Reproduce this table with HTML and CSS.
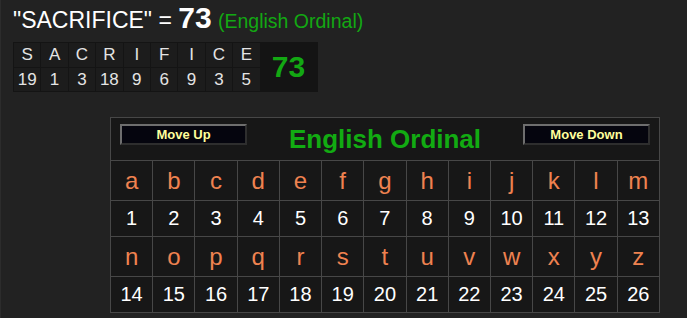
FILE: index.html
```html
<!DOCTYPE html>
<html lang="en">
<head>
<meta charset="utf-8">
<title>Gematria – SACRIFICE</title>
<link rel="stylesheet" href="styles.css">
</head>
<body>
<div class="page">
  <h1 class="phrase">
    <span class="word">"SACRIFICE" = </span><span class="total">73</span>
    <span class="cipher-name">(English Ordinal)</span>
  </h1>

  <div class="breakdown">
    <div class="bd-letter">S</div><div class="bd-letter">A</div><div class="bd-letter">C</div>
    <div class="bd-letter">R</div><div class="bd-letter">I</div><div class="bd-letter">F</div>
    <div class="bd-letter">I</div><div class="bd-letter">C</div><div class="bd-letter">E</div>
    <div class="bd-sum">73</div>
    <div class="bd-value">19</div><div class="bd-value">1</div><div class="bd-value">3</div>
    <div class="bd-value">18</div><div class="bd-value">9</div><div class="bd-value">6</div>
    <div class="bd-value">9</div><div class="bd-value">3</div><div class="bd-value">5</div>
  </div>

  <table class="chart">
    <thead>
      <tr>
        <th colspan="13">
          <div class="chart-head">
            <button class="move-btn" type="button">Move Up</button>
            <span class="chart-title">English Ordinal</span>
            <button class="move-btn" type="button">Move Down</button>
          </div>
        </th>
      </tr>
    </thead>
    <tbody>
      <tr class="letters">
        <td>a</td><td>b</td><td>c</td><td>d</td><td>e</td><td>f</td><td>g</td>
        <td>h</td><td>i</td><td>j</td><td>k</td><td>l</td><td>m</td>
      </tr>
      <tr class="values">
        <td>1</td><td>2</td><td>3</td><td>4</td><td>5</td><td>6</td><td>7</td>
        <td>8</td><td>9</td><td>10</td><td>11</td><td>12</td><td>13</td>
      </tr>
      <tr class="letters">
        <td>n</td><td>o</td><td>p</td><td>q</td><td>r</td><td>s</td><td>t</td>
        <td>u</td><td>v</td><td>w</td><td>x</td><td>y</td><td>z</td>
      </tr>
      <tr class="values">
        <td>14</td><td>15</td><td>16</td><td>17</td><td>18</td><td>19</td><td>20</td>
        <td>21</td><td>22</td><td>23</td><td>24</td><td>25</td><td>26</td>
      </tr>
    </tbody>
  </table>
</div>
</body>
</html>
```

FILE: styles.css
```css
html, body {
  margin: 0;
  padding: 0;
  background: #222222;
  font-family: "Liberation Sans", Arial, sans-serif;
  color: #ffffff;
}

body {
  border-left: 1px solid #2c2c2c;
  min-height: 318px;
  box-sizing: border-box;
}

.page {
  padding: 2px 0 0 12px;
}

/* phrase heading */
.phrase {
  margin: 0;
  font-weight: normal;
  font-size: 23px;
  line-height: 32px;
  white-space: nowrap;
}

.word {
  color: #ffffff;
}

.total {
  font-weight: bold;
  font-size: 30px;
}

.cipher-name {
  color: #13a813;
  font-size: 19.5px;
}

/* letter-by-letter breakdown */
.breakdown {
  display: inline-grid;
  grid-template-columns: repeat(9, 26.4px) 56px;
  grid-template-rows: 24px 23px;
  gap: 1px;
  padding: 1px;
  margin-top: 5px;
  background: #141414;
}

.bd-letter,
.bd-value {
  background: #1c1c1c;
  color: #e4e4e4;
  font-size: 17px;
  display: flex;
  align-items: center;
  justify-content: center;
}

.bd-sum {
  grid-column: 10;
  grid-row: 1 / span 2;
  display: flex;
  align-items: center;
  justify-content: center;
  color: #13a813;
  font-weight: bold;
  font-size: 30px;
  background: #141414;
}

/* cipher chart */
.chart {
  margin: 25px 0 0 97px;
  width: 550px;
  border-collapse: collapse;
  table-layout: fixed;
  background: #171717;
  border: 1px solid #474747;
}

.chart th {
  padding: 0;
  height: 42px;
  vertical-align: top;
  border: 1px solid #474747;
}

.chart-head {
  display: flex;
  align-items: flex-start;
  justify-content: space-between;
  padding: 6px 9px 0 9px;
}

.move-btn {
  width: 127px;
  height: 21px;
  padding: 0;
  background: #05050e;
  color: #ffff9c;
  font-family: "Liberation Sans", Arial, sans-serif;
  font-weight: bold;
  font-size: 13px;
  line-height: 17px;
  border-style: solid;
  border-width: 2px;
  border-color: #6e6e6e #2e2e2e #2e2e2e #6e6e6e;
}

.chart-title {
  color: #12ab12;
  font-weight: bold;
  font-size: 26px;
  line-height: 30px;
}

.chart td {
  border: 1px solid #474747;
  text-align: center;
  padding: 0;
}

.letters td {
  height: 39px;
  color: #ef8250;
  font-size: 24px;
}

.values td {
  height: 35px;
  color: #ffffff;
  font-size: 20px;
}
```
